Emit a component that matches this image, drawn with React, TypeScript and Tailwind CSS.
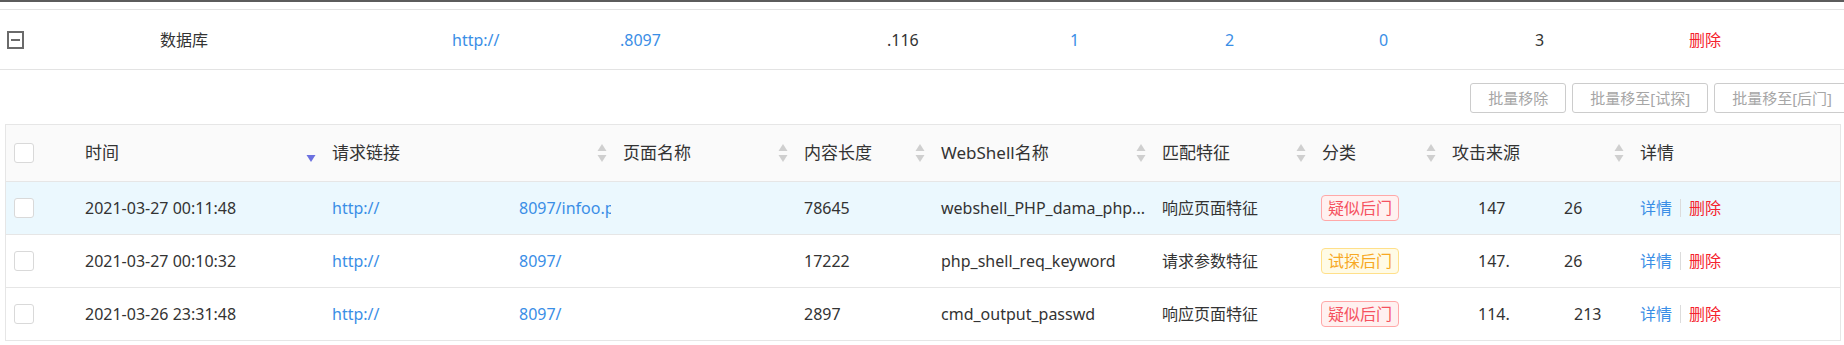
import React from 'react';

const grid =
  'grid grid-cols-[67px_247px_291px_181px_137px_221px_160px_130px_188px_212px]';

const SortIcon = ({ active }: { active?: boolean }) => (
  <svg width="10" height="20" viewBox="0 0 10 20" className="shrink-0">
    <path d="M5 1 L9.5 8 L0.5 8 Z" fill={active ? 'transparent' : '#cfcfcf'} />
    <path d="M0.5 12 L9.5 12 L5 19 Z" fill={active ? '#6b70e0' : '#cfcfcf'} />
  </svg>
);

const Checkbox = () => (
  <span className="block w-[20px] h-[20px] rounded-[3px] border border-[#d9d9d9] bg-white" />
);

type Row = {
  time: string;
  urlTail: string;
  length: string;
  name: string;
  feature: string;
  tag: 'suspect' | 'probe';
  ipHead: string;
  ipGap: number;
  ipTail: string;
  highlight?: boolean;
};

const rows: Row[] = [
  {
    time: '2021-03-27 00:11:48',
    urlTail: '8097/infoo.php',
    length: '78645',
    name: 'webshell_PHP_dama_php...',
    feature: '响应页面特征',
    tag: 'suspect',
    ipHead: '147',
    ipGap: 86,
    ipTail: '26',
    highlight: true,
  },
  {
    time: '2021-03-27 00:10:32',
    urlTail: '8097/',
    length: '17222',
    name: 'php_shell_req_keyword',
    feature: '请求参数特征',
    tag: 'probe',
    ipHead: '147.',
    ipGap: 86,
    ipTail: '26',
  },
  {
    time: '2021-03-26 23:31:48',
    urlTail: '8097/',
    length: '2897',
    name: 'cmd_output_passwd',
    feature: '响应页面特征',
    tag: 'suspect',
    ipHead: '114.',
    ipGap: 96,
    ipTail: '213',
  },
];

const headers: { label: string; sort: 'none' | 'idle' | 'active' }[] = [
  { label: '时间', sort: 'active' },
  { label: '请求链接', sort: 'idle' },
  { label: '页面名称', sort: 'idle' },
  { label: '内容长度', sort: 'idle' },
  { label: 'WebShell名称', sort: 'idle' },
  { label: '匹配特征', sort: 'idle' },
  { label: '分类', sort: 'idle' },
  { label: '攻击来源', sort: 'idle' },
  { label: '详情', sort: 'none' },
];

const Tag = ({ kind }: { kind: 'suspect' | 'probe' }) =>
  kind === 'suspect' ? (
    <span className="inline-flex items-center h-[26px] px-[6px] rounded-[4px] border border-[#ffa8a8] bg-[#fff1f0] text-[#f5515f] text-[16px]">
      疑似后门
    </span>
  ) : (
    <span className="inline-flex items-center h-[26px] px-[6px] rounded-[4px] border border-[#ffe08a] bg-[#fffbe6] text-[#f7a823] text-[16px]">
      试探后门
    </span>
  );

export default function App() {
  return (
    <div className="w-[1844px] h-[345px] overflow-hidden bg-white text-[#333] font-['Noto_Sans','Noto_Sans_CJK_SC',sans-serif]">
      <div className="h-[2px] bg-[#5c5c5c]" />
      <div className="h-[7px]" />
      <div className="h-[1px] bg-[#e3e3e3]" />

      {/* group row */}
      <div className="flex items-center h-[60px] border-b border-[#e3e3e3] text-[16px]">
        <div className="w-[160px] pl-[7px]">
          <span className="flex items-center justify-center w-[17px] h-[18px] border-2 border-[#6a6a6a]">
            <span className="block w-[9px] h-[2px] bg-[#6a6a6a]" />
          </span>
        </div>
        <span className="w-[292px]">数据库</span>
        <span className="w-[168px] text-[#3a8ee6]">http://</span>
        <span className="w-[267px] text-[#3a8ee6]">.8097</span>
        <span className="w-[183px]">.116</span>
        <span className="w-[155px] text-[#3a8ee6]">1</span>
        <span className="w-[154px] text-[#3a8ee6]">2</span>
        <span className="w-[156px] text-[#3a8ee6]">0</span>
        <span className="w-[154px]">3</span>
        <span className="text-[#f5222d]">删除</span>
      </div>

      {/* batch buttons */}
      <div className="flex justify-end gap-[6px] mt-[13px] -mr-[6px]">
        {['批量移除', '批量移至[试探]', '批量移至[后门]'].map((b) => (
          <button
            key={b}
            className="h-[30px] px-[17px] rounded-[3px] border border-[#cccccc] bg-white text-[15px] text-[#a6a6a6]"
          >
            {b}
          </button>
        ))}
      </div>

      {/* table */}
      <div className="mt-[11px] ml-[5px] w-[1836px] border-x border-t border-[#e6e6e6]">
        <div className={`${grid} h-[57px] bg-[#fafafa] border-b border-[#e6e6e6] text-[17px]`}>
          <div className="flex items-center pl-[8px]">
            <Checkbox />
          </div>
          {headers.map((h) => (
            <div key={h.label} className="flex items-center justify-between pl-[12px] pr-[4px]">
              <span>{h.label}</span>
              {h.sort !== 'none' && <SortIcon active={h.sort === 'active'} />}
            </div>
          ))}
        </div>

        {rows.map((r) => (
          <div
            key={r.time}
            className={`${grid} h-[53px] border-b border-[#e6e6e6] text-[16px] ${
              r.highlight ? 'bg-[#ebf8fe]' : 'bg-white'
            }`}
          >
            <div className="flex items-center pl-[8px]">
              <Checkbox />
            </div>
            <div className="flex items-center pl-[12px]">{r.time}</div>
            <div className="flex items-center pl-[12px]">
              <span className="flex w-[284px] overflow-hidden whitespace-nowrap text-[#3a8ee6]">
                <span className="shrink-0 w-[187px]">http://</span>
                <span className="shrink-0">{r.urlTail}</span>
              </span>
            </div>
            <div />
            <div className="flex items-center pl-[12px]">{r.length}</div>
            <div className="flex items-center pl-[12px] whitespace-nowrap">{r.name}</div>
            <div className="flex items-center pl-[12px]">{r.feature}</div>
            <div className="flex items-center pl-[11px]">
              <Tag kind={r.tag} />
            </div>
            <div className="flex items-center pl-[38px]">
              <span style={{ width: r.ipGap }}>{r.ipHead}</span>
              <span>{r.ipTail}</span>
            </div>
            <div className="flex items-center pl-[12px]">
              <span className="text-[#3a8ee6]">详情</span>
              <span className="mx-[8px] w-[1px] h-[18px] bg-[#dcdcdc]" />
              <span className="text-[#f5222d]">删除</span>
            </div>
          </div>
        ))}
      </div>
    </div>
  );
}
